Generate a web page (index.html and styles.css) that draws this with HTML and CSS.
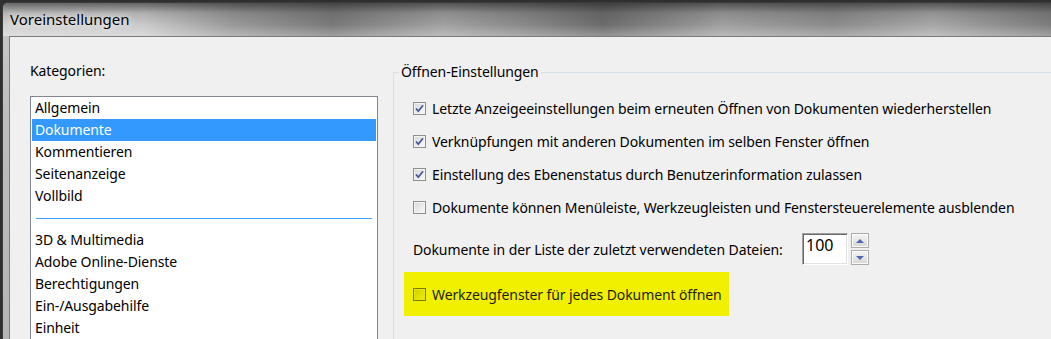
FILE: index.html
```html
<!DOCTYPE html>
<html lang="de">
<head>
  <meta charset="UTF-8">
  <title>Voreinstellungen</title>
  <link rel="stylesheet" href="styles.css">
</head>
<body>
  <div class="window">
    <div class="titlebar">Voreinstellungen</div>
    <div class="client">
      <div class="categories">
        <div class="cat-label">Kategorien:</div>
        <ul class="listbox">
          <li>Allgemein</li>
          <li class="selected">Dokumente</li>
          <li>Kommentieren</li>
          <li>Seitenanzeige</li>
          <li>Vollbild</li>
          <li class="sep"></li>
          <li>3D &amp; Multimedia</li>
          <li>Adobe Online-Dienste</li>
          <li>Berechtigungen</li>
          <li>Ein-/Ausgabehilfe</li>
          <li>Einheit</li>
        </ul>
      </div>

      <fieldset class="group">
        <legend>Öffnen-Einstellungen</legend>
        <div class="group-body">
          <div class="check-row">
            <span class="box"><svg class="tick" viewBox="0 0 11 11"><path d="M2 5.5 L4.3 8.2 L9 2.3"/></svg></span>
            <span>Letzte Anzeigeeinstellungen beim erneuten Öffnen von Dokumenten wiederherstellen</span>
          </div>
          <div class="check-row">
            <span class="box"><svg class="tick" viewBox="0 0 11 11"><path d="M2 5.5 L4.3 8.2 L9 2.3"/></svg></span>
            <span>Verknüpfungen mit anderen Dokumenten im selben Fenster öffnen</span>
          </div>
          <div class="check-row">
            <span class="box"><svg class="tick" viewBox="0 0 11 11"><path d="M2 5.5 L4.3 8.2 L9 2.3"/></svg></span>
            <span>Einstellung des Ebenenstatus durch Benutzerinformation zulassen</span>
          </div>
          <div class="check-row">
            <span class="box"></span>
            <span>Dokumente können Menüleiste, Werkzeugleisten und Fenstersteuerelemente ausblenden</span>
          </div>

          <div class="spin-row">
            <span class="spin-label">Dokumente in der Liste der zuletzt verwendeten Dateien:</span>
            <div class="spin-input">100</div>
            <div class="spin-buttons">
              <span class="spin-btn"><span class="arrow-up"></span></span>
              <span class="spin-btn"><span class="arrow-down"></span></span>
            </div>
          </div>

          <div class="marked">
            <div class="check-row">
              <span class="box"></span>
              <span>Werkzeugfenster für jedes Dokument öffnen</span>
            </div>
          </div>
        </div>
      </fieldset>
    </div>
  </div>
</body>
</html>
```

FILE: styles.css
```css
html, body {
  margin: 0;
  padding: 0;
  height: 339px;
  overflow: hidden;
}
body {
  background-color: #2f2f2f;
  font-family: "Noto Sans", "Open Sans", sans-serif;
  font-size: 14px;
  letter-spacing: -0.1px;
  color: #000;
}
.window {
  margin: 2px 0 0 2px;
  border-top: 1px solid #3c3c3c;
  border-left: 1px solid #3c3c3c;
  border-top-left-radius: 6px;
  padding-left: 6px;
  height: 400px;
  background: linear-gradient(to bottom, #c9c9c9 0, #bcbcbc 120px, #b4b4b4 400px);
}
.titlebar {
  height: 33px;
  line-height: 33px;
  margin-left: -6px;
  padding-left: 7px;
  font-size: 15px;
  letter-spacing: 0;
  color: #000;
  text-shadow: 0 0 6px rgba(255, 255, 255, 0.9), 0 0 10px rgba(255, 255, 255, 0.6);
  border-top-left-radius: 5px;
  background:
    linear-gradient(to bottom, rgba(30, 30, 30, 0.6) 0, rgba(60, 60, 60, 0.2) 10px, rgba(255, 255, 255, 0) 22px, rgba(255, 255, 255, 0.25) 32px),
    linear-gradient(to right, #d2d2d2 0, #cbcbcb 140px, #9a9a9a 230px, #7a7a7a 330px, #a2a2a2 440px, #8a8a8a 520px, #6c6c6c 600px, #a0a0a0 720px, #8c8c8c 830px, #a8a8a8 930px, #7c7c7c 1051px);
}
.client {
  display: flex;
  height: 360px;
  background-color: #f0f0f0;
  border-top: 1px solid #7c7c7c;
  border-left: 1px solid #7c7c7c;
}
.categories {
  padding: 24px 0 0 20px;
}
.cat-label {
  line-height: 20px;
  margin-bottom: 15px;
}
.listbox {
  list-style: none;
  margin: 0;
  padding: 0;
  width: 346px;
  height: 300px;
  background-color: #fff;
  border: 1px solid #828790;
}
.listbox li {
  height: 22px;
  line-height: 22px;
  margin: 0 1px;
  padding-left: 3px;
}
.listbox li.selected {
  background-color: #3399ff;
  color: #fff;
}
.listbox li.sep {
  box-sizing: border-box;
  height: 12px;
  margin: 0 5px 10px;
  padding: 0;
  border-bottom: 1px solid #3aa0ff;
}
.group {
  flex: 1;
  margin: 25px 0 0 15px;
  padding: 10px 0 0 0;
  border: 1px solid #d5dfe5;
  border-right: none;
  border-bottom: none;
  min-width: 0;
}
.group legend {
  margin-left: 5px;
  padding: 0 2px;
  line-height: 20px;
}
.group-body {
  padding-left: 19px;
}
.check-row {
  display: flex;
  align-items: center;
  height: 33px;
  white-space: nowrap;
}
.box {
  width: 11px;
  height: 11px;
  margin-right: 6px;
  border: 1px solid #8e8f8f;
  background: linear-gradient(135deg, #d8d8d8 0, #ececec 60%, #fbfbfb 100%);
  box-shadow: inset 0 0 0 1px #f4f4f4;
  flex-shrink: 0;
  display: flex;
}
.tick {
  width: 11px;
  height: 11px;
}
.tick path {
  fill: none;
  stroke: #45599a;
  stroke-width: 1.8;
}
.spin-row {
  display: flex;
  align-items: center;
  margin-top: 9px;
  height: 32px;
}
.spin-label {
  width: 389px;
  white-space: nowrap;
}
.spin-input {
  box-sizing: border-box;
  width: 46px;
  height: 32px;
  padding: 1px 0 0 3px;
  font-size: 16px;
  line-height: 20px;
  letter-spacing: 0;
  background-color: #fff;
  border-top: 1px solid #a0a0a0;
  border-left: 1px solid #a0a0a0;
  border-right: 1px solid #fff;
  border-bottom: 1px solid #fff;
  box-shadow: inset 1px 1px 0 #696969, inset -1px -1px 0 #e3e3e3;
}
.spin-buttons {
  display: flex;
  flex-direction: column;
  gap: 2px;
  margin-left: 3px;
}
.spin-btn {
  box-sizing: border-box;
  width: 18px;
  height: 15px;
  border: 1px solid #acacac;
  background: linear-gradient(to bottom, #f4f4f4 0, #e6e6e6 50%, #d6d6d6 100%);
  box-shadow: inset 0 0 0 1px #fcfcfc;
  display: flex;
  align-items: center;
  justify-content: center;
}
.arrow-up {
  width: 0;
  height: 0;
  border-left: 4px solid transparent;
  border-right: 4px solid transparent;
  border-bottom: 4px solid #4f66b3;
}
.arrow-down {
  width: 0;
  height: 0;
  border-left: 4px solid transparent;
  border-right: 4px solid transparent;
  border-top: 4px solid #4f66b3;
}
.marked {
  width: 316px;
  height: 44px;
  margin: 7px 0 0 -9px;
  padding-left: 9px;
  background-color: #f1f000;
  color: #1e1e00;
  display: flex;
  align-items: center;
}
.marked .check-row {
  height: 22px;
}
.marked .box {
  border-color: #7a7900;
  background: linear-gradient(135deg, #cfce00 0, #e2e100 60%, #eeed00 100%);
  box-shadow: inset 0 0 0 1px #e8e700;
}
```
